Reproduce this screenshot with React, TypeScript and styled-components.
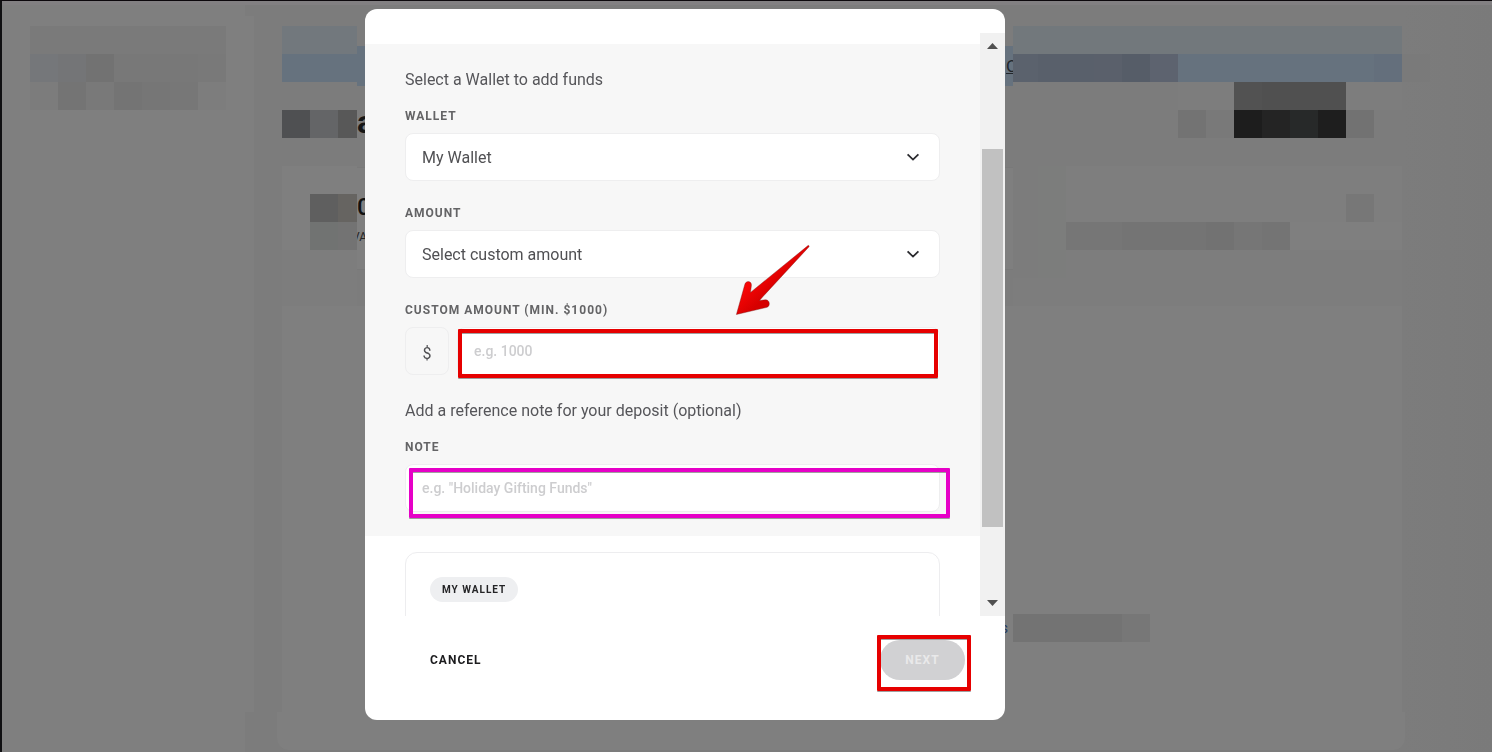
import React from "react";
import styled, { createGlobalStyle } from "styled-components";

const GlobalStyle = createGlobalStyle`
  *, *::before, *::after { box-sizing: border-box; }
  body { margin: 0; background: #7c7c7c; }
  body, button, input, select { font-family: Roboto, "Liberation Sans", sans-serif; }
`;

/* ---------- dimmed page behind the dialog ---------- */

const Page = styled.div`
  display: flex;
  flex-direction: column;
  height: 100vh;
  min-height: 600px;
  overflow: hidden;
  border-left: 2px solid #101012;
  border-top: 1px solid #0c080c;
  background: linear-gradient(to right, #7c7c7c 94%, #7a7a7a);
`;

const TopBar = styled.div`
  flex: none;
  height: 4px;
  background: #828082;
`;

const Columns = styled.div`
  display: flex;
  flex: 1;
  min-height: 0;
`;

const Sidebar = styled.aside`
  display: flex;
  flex-direction: column;
  flex: none;
  width: 252px;
`;

const SidebarEdge = styled.div<{ $height: number }>`
  flex: none;
  width: 243px;
  height: ${(p) => p.$height}px;
  background: #7f7f7f;
`;

const SidebarBody = styled.div`
  flex: 1;
  padding: 10px 28px;
  background: #7f7f7f;
`;

const Main = styled.main`
  display: flex;
  flex: 1;
  flex-direction: column;
  min-width: 0;
  padding: 21px 90px 2px 28px;
`;

const Summary = styled.div`
  display: flex;
  flex: none;
  height: 280px;
`;

const SummaryLeft = styled.div`
  flex: none;
  width: 75px;
`;

const SummaryCentre = styled.div`
  display: flex;
  flex: none;
  flex-direction: column;
  width: 656px;
  padding-top: 20px;
  overflow: hidden;
`;

const SummaryRight = styled.div`
  flex: 1;
  min-width: 0;
`;

const Banner = styled.div`
  display: flex;
  align-items: center;
  justify-content: flex-end;
  height: 40px;
  background: #66727e;
`;

const BannerLink = styled.a`
  width: 7px;
  color: #22262b;
  font-size: 17px;
  line-height: 24px;
`;

const PageTitle = styled.h1`
  margin: 18px 0 27px;
  color: #161616;
  font-size: 32px;
  line-height: 36px;
`;

const BalanceCard = styled.section`
  height: 103px;
  padding-top: 25px;
  border: 1px solid #797979;
  border-width: 1px 0;
  background: #7f7f7f;
`;

const Balance = styled.div`
  color: #101010;
  font-size: 24px;
  font-weight: 500;
  line-height: 28px;
`;

const BalanceLabel = styled.div`
  padding-top: 9px;
  color: #262626;
  font-size: 12px;
  line-height: 14px;
  text-indent: -5px;
`;

const History = styled.section`
  display: flex;
  flex: 1;
  min-height: 0;
  padding: 308px 0 0 711px;
  background: #7f7f7f;
`;

const HistoryText = styled.span`
  flex: none;
  width: 20px;
  padding-right: 5px;
  color: #1f3a5f;
  font-size: 14px;
  line-height: 28px;
  text-align: right;
`;

const HistoryEnd = styled.div`
  flex: none;
  height: 38px;
  margin: 0 -3px 0 -5px;
  border-radius: 0 0 12px 12px;
  background: #7f7f7f;
`;

const MosaicRow = styled.div`
  display: flex;
  height: 28px;
`;

const Tile = styled.div<{ $width: number; $color: string }>`
  flex: none;
  width: ${(p) => p.$width}px;
  background: ${(p) => p.$color};
`;

type TileSpec = [number, string];

const NONE = "transparent";

const sidebarTiles: TileSpec[][] = [
  [[196, "#7a7a7a"]],
  [[28, "#75777a"], [28, "#747577"], [28, "#727272"], [84, "#787878"], [28, "#797979"]],
  [[28, "#7c7c7c"], [28, "#747474"], [28, "#797979"], [28, "#747474"], [28, "#767676"], [28, "#777777"], [28, "#7d7d7d"]],
];

const leftTiles: TileSpec[][] = [
  [[75, "#72787d"]],
  [[75, "#66727e"]],
  [],
  [[28, "#4f5052"], [28, "#646567"], [19, "#585858"]],
  [],
  [[75, "#7f7f7f"]],
  [[28, "#7f7f7f"], [28, "#5f5f5f"], [19, "#666461"]],
  [[28, "#7f7f7f"], [28, "#717372"], [19, "#737373"]],
  [[75, "#7d7d7d"]],
  [[75, "#7d7d7d"]],
];

const rightTiles: TileSpec[][] = [
  [[389, "#72787c"]],
  [[25, "#5b626d"], [56, "#59606b"], [28, "#5a606b"], [28, "#565d68"], [28, "#5d636f"], [196, "#66727e"], [28, "#646f7c"], [28, "#7a7a7a"]],
  [[165, NONE], [56, "#7d7d7d"], [28, "#525252"], [84, "#505050"], [56, "#7d7d7d"]],
  [[165, NONE], [28, "#737373"], [28, "#797979"], [28, "#1d1d1d"], [28, "#242424"], [28, "#272929"], [28, "#1e1e1e"], [28, "#727272"]],
  [],
  [[25, NONE], [28, "#7c7d7c"], [336, "#7e7e7e"]],
  [[25, NONE], [28, "#7c7d7c"], [280, "#7e7e7e"], [28, "#777777"], [28, "#7e7e7e"]],
  [[25, NONE], [28, "#7c7d7c"], [56, "#767676"], [84, "#747474"], [28, "#727272"], [28, "#767676"], [28, "#747474"], [112, "#7f7f7f"]],
  [[25, NONE], [28, "#7c7d7c"], [336, "#7d7d7d"]],
  [[389, "#7d7d7d"]],
];

const historyTiles: TileSpec[][] = [[[109, "#737373"], [28, "#777777"]]];

function Mosaic({ rows }: { rows: TileSpec[][] }) {
  return (
    <div aria-hidden="true">
      {rows.map((row, r) => (
        <MosaicRow key={r}>
          {row.map(([width, color], i) => (
            <Tile key={i} $width={width} $color={color} />
          ))}
        </MosaicRow>
      ))}
    </div>
  );
}

/* ---------- dialog ---------- */

const Overlay = styled.div`
  position: fixed;
  inset: 0;
  display: flex;
  justify-content: center;
  padding: 9px 122px 32px 0;
`;

const Dialog = styled.form`
  display: flex;
  flex-direction: column;
  width: 640px;
  padding-top: 24px;
  border-radius: 12px;
  background: #ffffff;
`;

const ScrollArea = styled.div`
  display: flex;
  flex: 1;
  min-height: 0;
`;

const ScrollContent = styled.div`
  flex: 1;
  min-width: 0;
  padding-top: 11px;
  overflow: hidden;
`;

const FormPanel = styled.div`
  display: flex;
  flex-direction: column;
  gap: 24px;
  padding: 24px 40px;
  background: #f7f7f7;
`;

const Group = styled.div`
  display: flex;
  flex-direction: column;
  gap: 16px;
`;

const Intro = styled.p`
  margin: 0;
  color: #56565a;
  font-size: 16px;
  line-height: 24px;
`;

const Field = styled.div`
  display: flex;
  flex-direction: column;
  gap: 8px;
`;

const Label = styled.label`
  color: #646466;
  font-size: 12px;
  font-weight: 700;
  line-height: 17px;
  letter-spacing: 1px;
  text-transform: uppercase;
`;

const Control = styled.div`
  position: relative;
  display: flex;
  flex: 1;
`;

const Select = styled.select`
  width: 100%;
  height: 48px;
  padding: 0 16px;
  border: 1px solid #eeeeef;
  border-radius: 8px;
  appearance: none;
  background: #ffffff;
  color: #505053;
  font-size: 16px;
`;

const Chevron = styled.svg`
  position: absolute;
  top: 16px;
  right: 19px;
  width: 16px;
  height: 16px;
  pointer-events: none;
`;

const TextInput = styled.input`
  width: 100%;
  height: 48px;
  padding: 0 16px;
  border: 1px solid #eeeeef;
  border-radius: 8px;
  background: #ffffff;
  color: #505053;
  font-size: 14px;
  font-weight: 500;
  &::placeholder { color: #cdcdcf; opacity: 1; }
`;

const InputRow = styled.div`
  display: flex;
  gap: 8px;
`;

const Currency = styled.span`
  display: flex;
  flex: none;
  align-items: center;
  justify-content: center;
  width: 44px;
  height: 48px;
  padding-top: 4px;
  border: 1px solid #eeeeef;
  border-radius: 8px;
  color: #505053;
  font-size: 16px;
`;

const Highlight = styled.span<{ $color: string; $inset: string }>`
  position: absolute;
  inset: ${(p) => p.$inset};
  border: 4px solid ${(p) => p.$color};
  border-radius: 1px;
  box-shadow: 0 1px 0 #707070aa, inset 0 1px 0 #707070aa;
  pointer-events: none;
`;

const Arrow = styled.svg`
  position: absolute;
  top: -84px;
  right: 128px;
  width: 78px;
  height: 74px;
  pointer-events: none;
`;

const Preview = styled.div`
  height: 160px;
  margin: 16px 40px 0;
  padding: 24px;
  border: 1px solid #ededef;
  border-radius: 12px;
`;

const Pill = styled.span`
  display: inline-block;
  padding: 0 12px;
  border-radius: 13px;
  background: #eeeff1;
  color: #242426;
  font-size: 10px;
  font-weight: 700;
  line-height: 25px;
  letter-spacing: 1px;
  vertical-align: top;
`;

const Scrollbar = styled.div`
  display: flex;
  flex: none;
  flex-direction: column;
  align-items: center;
  width: 25px;
  background: #f1f1f1;
`;

const ScrollArrow = styled.svg`
  flex: none;
  width: 25px;
  height: 25px;
`;

const Track = styled.div<{ $grow: number }>`
  flex: ${(p) => p.$grow} 1 0;
`;

const Thumb = styled.div`
  flex: 378 1 0;
  width: 21px;
  background: #c1c1c1;
`;

const Footer = styled.div`
  display: flex;
  flex: none;
  justify-content: space-between;
  padding: 24px 40px 40px;
`;

const SubmitSlot = styled.div`
  position: relative;
  display: flex;
`;

const Action = styled.button<{ $filled?: boolean }>`
  min-width: 85px;
  height: 40px;
  padding: 0 25px;
  border: 0;
  border-radius: 20px;
  background: ${(p) => (p.$filled ? "#d1d1d3" : "transparent")};
  color: ${(p) => (p.$filled ? "#e9e9ea" : "#1c1c1e")};
  font-size: 12px;
  font-weight: 700;
  letter-spacing: 1px;
`;

const ChevronIcon = () => (
  <Chevron viewBox="0 0 16 16" fill="none" aria-hidden="true">
    <path d="M2.6 5.4 8 10.6l5.4-5.2" stroke="#2a2a2e" strokeWidth="1.8" />
  </Chevron>
);

export default function App() {
  return (
    <>
      <GlobalStyle />
      <Page>
        <TopBar />
        <Columns>
          <Sidebar>
            <SidebarEdge $height={11} />
            <SidebarBody>
              <Mosaic rows={sidebarTiles} />
            </SidebarBody>
            <SidebarEdge $height={40} />
          </Sidebar>
          <Main>
            <Summary>
              <SummaryLeft>
                <Mosaic rows={leftTiles} />
              </SummaryLeft>
              <SummaryCentre>
                <Banner>
                  <BannerLink href="#">O</BannerLink>
                </Banner>
                <PageTitle>a</PageTitle>
                <BalanceCard>
                  <Balance>0</Balance>
                  <BalanceLabel>VA</BalanceLabel>
                </BalanceCard>
              </SummaryCentre>
              <SummaryRight>
                <Mosaic rows={rightTiles} />
              </SummaryRight>
            </Summary>
            <History>
              <HistoryText>s</HistoryText>
              <Mosaic rows={historyTiles} />
            </History>
            <HistoryEnd />
          </Main>
        </Columns>
      </Page>

      <Overlay>
        <Dialog role="dialog" aria-label="Add funds" onSubmit={(e) => e.preventDefault()}>
          <ScrollArea>
            <ScrollContent>
              <FormPanel>
                <Group>
                  <Intro>Select a Wallet to add funds</Intro>
                  <Field>
                    <Label htmlFor="wallet">Wallet</Label>
                    <Control>
                      <Select id="wallet">
                        <option>My Wallet</option>
                      </Select>
                      <ChevronIcon />
                    </Control>
                  </Field>
                </Group>
                <Field>
                  <Label htmlFor="amount">Amount</Label>
                  <Control>
                    <Select id="amount">
                      <option>Select custom amount</option>
                    </Select>
                    <ChevronIcon />
                  </Control>
                </Field>
                <Field>
                  <Label htmlFor="custom">Custom amount (min. $1000)</Label>
                  <InputRow>
                    <Currency>$</Currency>
                    <Control>
                      <TextInput id="custom" placeholder="e.g. 1000" />
                      <Highlight $color="#e60000" $inset="2px 2px -3px 1px" />
                      <Arrow viewBox="0 0 78 74" aria-hidden="true">
                        <defs>
                          <linearGradient id="arrowFill" x1="0.35" y1="0.4" x2="0.55" y2="0.6">
                            <stop offset="0" stopColor="#f70505" />
                            <stop offset="1" stopColor="#d60000" />
                          </linearGradient>
                        </defs>
                        <path
                          d="M74 2.6C75.2 2.2 75.4 3 74.8 4L29 53.5L25.500 57.500L31.500 56.800C36 56.800 36.500 63 33 64.300L2.400 71.500L10.800 41.500C12 37 18 38 17.400 42.500L16.500 49.500L22.500 44.500Z"
                          fill="url(#arrowFill)"
                          stroke="#7a1a1a"
                          strokeOpacity="0.5"
                          strokeWidth="0.8"
                        />
                      </Arrow>
                    </Control>
                  </InputRow>
                </Field>
                <Group>
                  <Intro>Add a reference note for your deposit (optional)</Intro>
                  <Field>
                    <Label htmlFor="note">Note</Label>
                    <Control>
                      <TextInput id="note" placeholder={'e.g. "Holiday Gifting Funds"'} />
                      <Highlight $color="#e600c7" $inset="4px -10px -6px 4px" />
                    </Control>
                  </Field>
                </Group>
              </FormPanel>
              <Preview>
                <Pill>MY WALLET</Pill>
              </Preview>
            </ScrollContent>
            <Scrollbar aria-hidden="true">
              <ScrollArrow viewBox="0 0 25 25">
                <path d="M7 16h11l-5.500-6z" fill="#505050" />
              </ScrollArrow>
              <Track $grow={91} />
              <Thumb />
              <Track $grow={64} />
              <ScrollArrow viewBox="0 0 25 25">
                <path d="M7 9h11l-5.500 6z" fill="#505050" />
              </ScrollArrow>
            </Scrollbar>
          </ScrollArea>
          <Footer>
            <Action type="button">CANCEL</Action>
            <SubmitSlot>
              <Action type="submit" $filled>NEXT</Action>
              <Highlight $color="#e60000" $inset="-5px -6px -11px -3px" />
            </SubmitSlot>
          </Footer>
        </Dialog>
      </Overlay>
    </>
  );
}
